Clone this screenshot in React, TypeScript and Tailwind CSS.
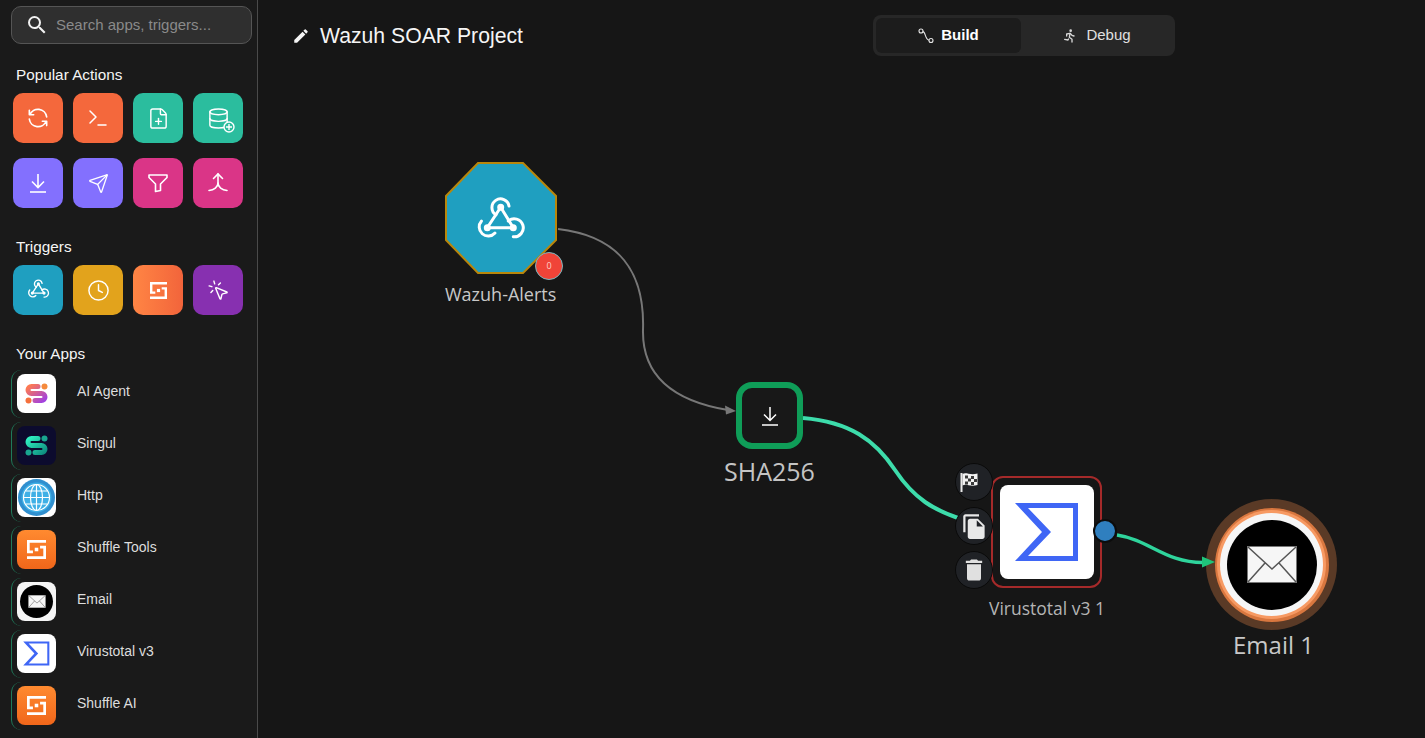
import type { ReactNode } from 'react';
import { Clock, Database, FilePlus, MousePointerClick, Send, Terminal } from 'lucide-react';
import { MdDelete, MdEdit, MdFileCopy, MdSearch } from 'react-icons/md';
import { TbRefresh, TbRun } from 'react-icons/tb';

function ShuffleMark({ size = 19 }: { size?: number }) {
  return (
    <svg width={size} height={size} viewBox="0 0 24 24" fill="none" stroke="white" strokeWidth="3.4">
      <path d="M24 1.7H1.7V15H7.5" />
      <path d="M0 22.3H22.3V9H16.5" />
      <rect x="9.75" y="9.75" width="4.5" height="4.5" fill="white" stroke="none" />
    </svg>
  );
}

function WebhookMark({ size, className }: { size: number; className?: string }) {
  return (
    <svg className={className} width={size} height={size} viewBox="0 0 60 60" fill="none" stroke="white" strokeWidth="3" strokeLinecap="round">
      <path d="M29.7 15.3L16.3 35.7H42.3L29.7 15.3" />
      <path d="M38 14A8.6 8.6 0 1 0 25 22.8" />
      <path d="M10.5 29A9 9 0 1 0 24 41" />
      <path d="M37.3 29A9 9 0 1 1 42.3 44.7" />
      <circle cx="29.7" cy="15.3" r="2" fill="white" />
      <circle cx="16.3" cy="35.7" r="2" fill="white" />
      <circle cx="42.3" cy="35.7" r="2" fill="white" />
    </svg>
  );
}

function DownloadMark({ size = 24, width = 1.6 }: { size?: number; width?: number }) {
  return (
    <svg width={size} height={size} viewBox="0 0 24 24" fill="none" stroke="white" strokeWidth={width}>
      <path d="M12 3V15.5M6 10.5L12 16.5L18 10.5" />
      <path d="M4 21H20" />
    </svg>
  );
}

function MergeMark() {
  return (
    <svg width="24" height="24" viewBox="0 0 24 24" fill="none" stroke="white" strokeWidth="1.6" strokeLinecap="round">
      <path d="M7.5 7.5L12 3L16.5 7.5" />
      <path d="M12 3V12C12 16 8 19 3 19.5" />
      <path d="M12 12C12 16 16 19 21 19.5" />
    </svg>
  );
}

function FunnelMark() {
  return (
    <svg width="24" height="24" viewBox="0 0 24 24" fill="none" stroke="white" strokeWidth="1.6" strokeLinejoin="round">
      <path d="M3 4H21V6.5L14.5 13V19.5L9.5 20.5V13L3 6.5Z" />
    </svg>
  );
}

function FlagMark() {
  return (
    <svg className="-ml-[10px]" width="18" height="20" viewBox="0 0 18 20">
      <path d="M0.5 1H2.5V20H0.5Z" fill="#e8e8e8" />
      <path d="M2.5 2C6 0 10 3.5 17.5 1.5V13C10 15 6 11.5 2.5 13.5Z" fill="#f2f2f2" />
      <g fill="#3a3a3a">
        <rect x="5" y="3.5" width="3" height="3" />
        <rect x="11" y="4" width="3" height="3" />
        <rect x="8" y="6.5" width="3" height="3" />
        <rect x="14" y="7" width="3" height="3" />
        <rect x="5" y="9.5" width="3" height="3" />
        <rect x="11" y="10" width="3" height="3" />
      </g>
    </svg>
  );
}

function DatabasePlus() {
  return (
    <span className="relative flex">
      <Database size={23} strokeWidth={1.5} color="white" />
      <svg className="absolute -right-[5px] -bottom-[3px]" width="12" height="12" viewBox="0 0 12 12" fill="#2bbd9e" stroke="white" strokeWidth="1.4">
        <circle cx="6" cy="6" r="5" />
        <path d="M6 3V9M3 6H9" />
      </svg>
    </span>
  );
}

function Tile({ className, children }: { className: string; children: ReactNode }) {
  return <div className={`w-[50px] h-[50px] rounded-[10px] flex items-center justify-center ${className}`}>{children}</div>;
}

function Envelope({ w, h }: { w: number; h: number }) {
  return (
    <svg width={w} height={h} viewBox="0 0 50 37">
      <rect x="0.5" y="0.5" width="49" height="36" fill="#f6f6f6" stroke="#777" />
      <path d="M1 1L25 23L49 1M1 36L18 17M49 36L32 17" fill="none" stroke="#555" strokeWidth="1.5" />
    </svg>
  );
}

function AgentIcon({ dark }: { dark?: boolean }) {
  const id = dark ? 'singulS' : 'agentS';
  return (
    <svg width="39" height="39" viewBox="0 0 39 39">
      <defs>
        <linearGradient id={id} x1="0" y1="0" x2="1" y2="1">
          <stop offset="0" stopColor={dark ? '#2ff0c0' : '#ff7a50'} />
          <stop offset="1" stopColor={dark ? '#0f8f80' : '#a040e0'} />
        </linearGradient>
      </defs>
      <path d="M21 12.5H14.5A3.5 3.5 0 0 0 14.5 19.5H24.5A3.5 3.5 0 0 1 24.5 26.5H18" fill="none" stroke={`url(#${id})`} strokeWidth="5" strokeLinecap="round" />
      <circle cx="27.5" cy="12.5" r="3" fill={dark ? '#19a58f' : '#f58a3c'} />
      <circle cx="11.5" cy="26.5" r="3" fill={dark ? '#19a58f' : '#f5703c'} />
    </svg>
  );
}

function GlobeIcon() {
  return (
    <svg width="39" height="39" viewBox="0 0 39 39" fill="none">
      <circle cx="19.5" cy="19.5" r="18.5" fill="#2f8fcf" />
      <circle cx="19.5" cy="19.5" r="15" fill="#3fb0e6" />
      <g stroke="white" strokeWidth="1.2">
        <circle cx="19.5" cy="19.5" r="13" />
        <ellipse cx="19.5" cy="19.5" rx="6" ry="13" />
        <path d="M19.5 6.5V32.5M6.5 19.5H32.5M9 13H30M9 26H30" />
      </g>
    </svg>
  );
}

function EmailIcon() {
  return (
    <div className="w-[33px] h-[33px] rounded-full bg-black flex items-center justify-center">
      <Envelope w={18} h={13} />
    </div>
  );
}

function SigmaMark({ size }: { size: number }) {
  return (
    <svg width={size} height={size} viewBox="0 0 94 94">
      <path fillRule="evenodd" fill="#3f66f5" d="M15 18H78V76H15L42 47ZM28 23L51 47L28 71H73V23Z" />
    </svg>
  );
}

const apps = [
  { name: 'AI Agent', bg: 'bg-white', icon: <AgentIcon /> },
  { name: 'Singul', bg: 'bg-[#0c0b2e]', icon: <AgentIcon dark /> },
  { name: 'Http', bg: 'bg-white', icon: <GlobeIcon /> },
  { name: 'Shuffle Tools', bg: 'bg-gradient-to-b from-[#ff8a30] to-[#f0661a]', icon: <ShuffleMark /> },
  { name: 'Email', bg: 'bg-[#f5f5f5]', icon: <EmailIcon /> },
  { name: 'Virustotal v3', bg: 'bg-white', icon: <SigmaMark size={39} /> },
  { name: 'Shuffle AI', bg: 'bg-gradient-to-b from-[#ff8a30] to-[#f0661a]', icon: <ShuffleMark /> },
];

function Sidebar() {
  return (
    <aside className="w-[258px] h-full shrink-0 bg-[#1a1a1a] border-r border-[#4a4a4a] flex flex-col overflow-hidden">
      <div className="mt-[6px] ml-[11px] w-[241px] h-[38px] shrink-0 rounded-[10px] bg-[#2f2f2f] border border-[#555] flex items-center pl-[13px] gap-[7px]">
        <MdSearch size={24} color="#f2f2f2" />
        <span className="text-[15px] mt-[1px] text-[#8a8a8a]">Search apps, triggers...</span>
      </div>

      <h3 className="mt-[22px] ml-[16px] text-[15.3px] leading-[18px] text-[#f5f5f5]">Popular Actions</h3>
      <div className="mt-[9px] ml-[13px] grid grid-cols-[repeat(4,50px)] gap-x-[10px] gap-y-[15px]">
        <Tile className="bg-[#f4683c]"><TbRefresh size={26} strokeWidth={1.5} color="white" /></Tile>
        <Tile className="bg-[#f4683c]"><Terminal size={24} strokeWidth={1.5} color="white" /></Tile>
        <Tile className="bg-[#2bbd9e]"><FilePlus size={23} strokeWidth={1.5} color="white" /></Tile>
        <Tile className="bg-[#2bbd9e]"><DatabasePlus /></Tile>
        <Tile className="bg-[#8370fe]"><DownloadMark /></Tile>
        <Tile className="bg-[#8370fe]"><Send size={21} strokeWidth={1.5} color="white" /></Tile>
        <Tile className="bg-[#da3587]"><FunnelMark /></Tile>
        <Tile className="bg-[#da3587]"><MergeMark /></Tile>
      </div>

      <h3 className="mt-[30px] ml-[16px] text-[15.3px] leading-[18px] text-[#f5f5f5]">Triggers</h3>
      <div className="mt-[9px] ml-[13px] grid grid-cols-[repeat(4,50px)] gap-x-[10px]">
        <Tile className="bg-[#1f9fc0]"><WebhookMark size={27} /></Tile>
        <Tile className="bg-[#e2a31c]"><Clock size={23} strokeWidth={1.5} color="white" /></Tile>
        <Tile className="bg-gradient-to-r from-[#ff8544] to-[#f2643b]"><ShuffleMark size={17} /></Tile>
        <Tile className="bg-[#8730b0]"><MousePointerClick size={23} strokeWidth={1.5} color="white" /></Tile>
      </div>

      <h3 className="mt-[30px] ml-[16px] text-[15.3px] leading-[18px] text-[#f5f5f5]">Your Apps</h3>
      <div className="mt-[7px] ml-[11px] flex flex-col gap-[4px]">
        {apps.map((app) => (
          <div key={app.name} className="h-[48px] shrink-0 flex items-center pl-[5px] gap-[21px] border-l border-[#1f7a5a] rounded-l-[10px]">
            <div className={`w-[39px] h-[39px] -mt-[1px] rounded-[8px] flex items-center justify-center overflow-hidden ${app.bg}`}>{app.icon}</div>
            <span className="text-[14px] -mt-[5px] text-[#dddddd]">{app.name}</span>
          </div>
        ))}
      </div>
    </aside>
  );
}

function Toolbar() {
  return (
    <header className="absolute top-0 left-0 flex items-start pt-[15px] pl-[34px]">
      <div className="w-[581px] h-[41px] flex items-center gap-[10px]">
        <MdEdit size={18} color="#f5f5f5" />
        <h1 className="text-[21.2px] font-medium text-[#f5f5f5]">Wazuh SOAR Project</h1>
      </div>
      <div className="w-[302px] h-[41px] rounded-[8px] bg-[#272727] p-[3px] flex">
        <div className="w-[145px] rounded-[6px] bg-[#1c1c1c] flex items-center justify-center gap-[7px] text-white text-[15px] font-bold">
          <svg width="16" height="16" viewBox="0 0 16 16" fill="none" stroke="#e5e5e5" strokeWidth="1.1">
            <circle cx="3" cy="3" r="2" />
            <circle cx="13" cy="12.5" r="2" />
            <path d="M4.8 3.6C8 4 6.5 11 11 12.2" />
          </svg>
          Build
        </div>
        <div className="flex-1 flex items-center justify-center gap-[8px] text-[#e0e0e0] text-[15px]">
          <TbRun size={16} color="#d8d8d8" />
          Debug
        </div>
      </div>
    </header>
  );
}

function Edges() {
  return (
    <svg className="absolute inset-0" width="1167" height="738" viewBox="258 0 1167 738" fill="none">
      <path d="M558 229C618 236 645 270 643 330C642 380 680 402 728 410" stroke="#777" strokeWidth="2" />
      <path d="M736 411L725 405.5L726 414.5Z" fill="#777" />
      <path d="M803 418C850 422 875 440 895 470C915 500 935 510 958 518" stroke="#3ddcab" strokeWidth="4" />
      <path d="M1117 535C1150 540 1165 563 1204 562.5" stroke="#2fd49c" strokeWidth="3.5" />
    </svg>
  );
}

function ArrowHead() {
  return (
    <svg className="absolute inset-0" width="1167" height="738" viewBox="258 0 1167 738">
      <path d="M1215 562L1202 556.5V567.5Z" fill="#1fc47a" />
    </svg>
  );
}

function CircleAction({ children }: { children: ReactNode }) {
  return (
    <div className="w-[38px] h-[38px] rounded-full bg-[#202226] border border-[#0a0a0a] flex items-center justify-center">
      {children}
    </div>
  );
}

function Nodes() {
  return (
    <div className="absolute inset-0 font-['Open_Sans',sans-serif]">
      {/* webhook */}
      <div className="absolute left-[187px] top-[162px] w-[112px] h-[112px]">
        <svg className="absolute inset-0" width="112" height="112" viewBox="0 0 112 112">
          <polygon points="33,1 78,1 111,34 111,78 78,111 33,111 1,78 1,34" fill="#1f9fc0" stroke="#b8860b" strokeWidth="2" />
        </svg>
        <WebhookMark className="absolute left-[26px] top-[30px]" size={60} />
        <div className="absolute left-[90px] top-[90px] w-[28px] h-[28px] rounded-full bg-[#f04438] border border-[#7ab8c0] flex items-center justify-center text-[9px] text-[#ffd0c8]">0</div>
      </div>
      <span className="absolute left-[187px] top-[280px] text-[18px] leading-[28px] text-[#c8c8c8] whitespace-nowrap">Wazuh-Alerts</span>

      {/* sha256 */}
      <div className="absolute left-[478px] top-[382px] w-[67px] h-[67px] rounded-[16px] border-[6px] border-[#0f9d58] bg-[#181818] flex items-center justify-center">
        <DownloadMark size={24} width={1.5} />
      </div>
      <span className="absolute left-[466px] top-[453px] text-[25px] leading-[36px] text-[#c4c4c4] whitespace-nowrap">SHA256</span>

      {/* virustotal */}
      <div className="absolute left-[733px] top-[476px] w-[111px] h-[112px] rounded-[12px] border-2 border-[#a52a2a] flex items-center justify-center">
        <div className="w-[94px] h-[94px] rounded-[8px] bg-white">
          <SigmaMark size={94} />
        </div>
      </div>
      <div className="absolute left-[697px] top-[463px] flex flex-col gap-[6px]">
        <CircleAction><FlagMark /></CircleAction>
        <CircleAction><MdFileCopy size={27} color="#e8e8e8" /></CircleAction>
        <CircleAction><MdDelete size={28} color="#e0e0e0" /></CircleAction>
      </div>
      <div className="absolute left-[835px] top-[519px] w-[24px] h-[24px] rounded-full bg-[#2f7fbf] border-2 border-[#0c0c0c]" />
      <span className="absolute left-[731px] top-[595px] text-[17.5px] leading-[26px] text-[#b4b4b4] whitespace-nowrap">Virustotal v3 1</span>

      {/* email */}
      <div className="absolute left-[948px] top-[499px] w-[131px] h-[131px] rounded-full bg-[#5a3a26] flex items-center justify-center">
        <div className="w-[114px] h-[114px] rounded-full bg-[#d9773f] flex items-center justify-center">
          <div className="w-[109px] h-[109px] rounded-full bg-[#f79a63] flex items-center justify-center">
            <div className="w-[103px] h-[103px] rounded-full bg-[#f6f6f6] flex items-center justify-center">
              <div className="w-[90px] h-[90px] rounded-full bg-black flex items-center justify-center">
                <Envelope w={50} h={37} />
              </div>
            </div>
          </div>
        </div>
      </div>
      <span className="absolute left-[975px] top-[627px] text-[24px] leading-[36px] text-[#c8c8c8] whitespace-nowrap">Email 1</span>
    </div>
  );
}

export default function App() {
  return (
    <div className="flex w-full h-screen overflow-hidden bg-[#161616] font-['Liberation_Sans',Arial,sans-serif]">
      <Sidebar />
      <main className="relative flex-1 h-full overflow-hidden">
        <Edges />
        <Nodes />
        <ArrowHead />
        <Toolbar />
      </main>
    </div>
  );
}
